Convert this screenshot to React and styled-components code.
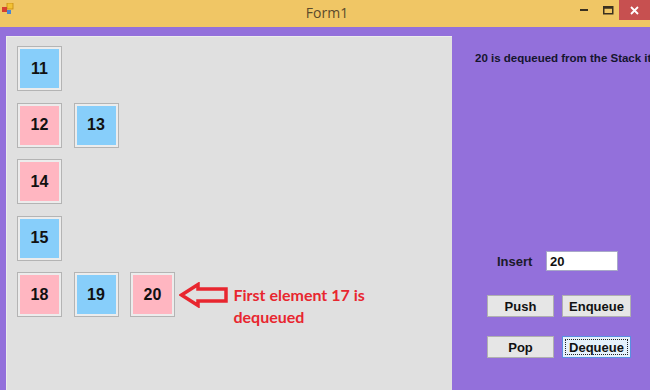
import styled, { createGlobalStyle } from 'styled-components';

const GlobalStyle = createGlobalStyle`
  html, body {
    margin: 0;
    padding: 0;
    background: #9370db;
  }
`;

const Window = styled.div`
  width: 650px;
  height: 390px;
  display: flex;
  flex-direction: column;
  overflow: hidden;
  font-family: "Liberation Sans", Arial, sans-serif;
`;

const TitleBar = styled.div`
  height: 27px;
  flex: none;
  background: #f0c665;
  display: grid;
  grid-template-columns: 1fr auto 1fr;
  align-items: start;
`;

const AppIcon = styled.div`
  padding: 3px 0 0 2px;
  display: flex;
`;

const Title = styled.div`
  font-family: "Open Sans", "Noto Sans", sans-serif;
  font-size: 14px;
  color: #5b4a2b;
  line-height: 25px;
  padding-left: 4px;
`;

const Controls = styled.div`
  display: flex;
  justify-content: flex-end;
  align-items: start;
`;

const CtrlButton = styled.div`
  width: ${(p) => p.$w}px;
  height: 20px;
  display: flex;
  align-items: center;
  justify-content: center;
  background: ${(p) => (p.$close ? '#c75050' : 'transparent')};
`;

const Client = styled.div`
  flex: 1;
  background: #9370db;
  display: flex;
  padding: 9px 0 0 6px;
  min-height: 0;
`;

const Panel = styled.div`
  width: 446px;
  flex: none;
  background: #e0e0e0;
  border-top: 1px solid #ececec;
  border-left: 1px solid #ececec;
  box-sizing: border-box;
  padding: 9px 0 0 10px;
  display: flex;
  flex-direction: column;
  gap: 11.5px;
`;

const Row = styled.div`
  display: flex;
  align-items: flex-start;
  gap: 11.5px;
`;

const Cell = styled.div`
  width: 45px;
  height: 45px;
  box-sizing: border-box;
  border: 1px solid #b4b4b4;
  box-shadow: inset 0 0 0 2px #ececec;
  background: ${(p) => (p.$pink ? '#ffb6c1' : '#87cefa')};
  display: flex;
  align-items: center;
  justify-content: center;
  font-weight: bold;
  font-size: 16px;
  color: #111;
`;

const Note = styled.div`
  display: flex;
  align-items: flex-start;
  margin-left: -8px;

  svg {
    margin-top: 10px;
  }
`;

const NoteText = styled.div`
  font-family: Lato, "Open Sans", sans-serif;
  font-weight: bold;
  font-size: 16px;
  line-height: 22px;
  color: #e8262f;
  margin-left: 5px;
  margin-top: 12px;
  width: 150px;
`;

const Side = styled.div`
  flex: 1;
  display: flex;
  flex-direction: column;
  padding-top: 16px;
  overflow: hidden;
`;

const Message = styled.div`
  font-size: 11.5px;
  font-weight: bold;
  color: #15152e;
  white-space: nowrap;
  padding-left: 23px;
`;

const InsertRow = styled.div`
  display: flex;
  align-items: center;
  margin-top: 187px;
  padding-left: 45px;
`;

const Label = styled.span`
  font-size: 13px;
  font-weight: bold;
  color: #1a1a2a;
  width: 49px;
`;

const TextBox = styled.div`
  width: 72px;
  height: 20px;
  box-sizing: border-box;
  background: #fff;
  border: 1px solid #a8a8c8;
  font-size: 13px;
  font-weight: bold;
  padding: 2px 0 0 3px;
  color: #111;
`;

const ButtonRow = styled.div`
  display: flex;
  gap: 8px;
  padding-left: 35px;
  margin-top: ${(p) => p.$top}px;
`;

const Button = styled.div`
  width: ${(p) => p.$w}px;
  height: 22px;
  box-sizing: border-box;
  border: 1px solid ${(p) => (p.$focus ? '#5a8ee0' : '#b0b0b0')};
  background: ${(p) => (p.$focus ? '#e5f1fb' : '#e6e6e6')};
  display: flex;
  align-items: center;
  justify-content: center;
  font-size: 13px;
  font-weight: bold;
  color: #111;
  position: relative;
`;

const FocusRing = styled.span`
  position: absolute;
  inset: 2px;
  border: 1px dotted #222;
`;

const rows = [
  [{ n: 11 }],
  [{ n: 12, pink: true }, { n: 13 }],
  [{ n: 14, pink: true }],
  [{ n: 15 }],
  [{ n: 18, pink: true }, { n: 19 }, { n: 20, pink: true }],
];

export default function App() {
  return (
    <Window>
      <GlobalStyle />
      <TitleBar>
        <AppIcon>
          <svg width="12" height="12" viewBox="0 0 12 12">
            <rect x="5" y="0" width="6" height="6" fill="#f3c233" stroke="#c58a12" strokeWidth="0.8" />
            <rect x="0" y="4" width="5" height="5" fill="#d64030" />
            <rect x="5" y="7" width="4" height="4" fill="#4a86d0" />
          </svg>
        </AppIcon>
        <Title>Form1</Title>
        <Controls>
          <CtrlButton $w={26}>
            <svg width="9" height="3" viewBox="0 0 9 3">
              <rect x="0" y="0" width="8" height="2" fill="#3a3020" />
            </svg>
          </CtrlButton>
          <CtrlButton $w={22}>
            <svg width="11" height="9" viewBox="0 0 11 9">
              <rect x="0.75" y="0.75" width="9" height="7" fill="none" stroke="#3a3020" strokeWidth="1.5" />
              <rect x="0.75" y="0.75" width="9" height="2" fill="#3a3020" />
            </svg>
          </CtrlButton>
          <CtrlButton $w={31} $close>
            <svg width="9" height="9" viewBox="0 0 9 9">
              <path d="M1 1L8 8M8 1L1 8" stroke="#fff" strokeWidth="1.8" />
            </svg>
          </CtrlButton>
        </Controls>
      </TitleBar>
      <Client>
        <Panel>
          {rows.map((row, i) => (
            <Row key={i}>
              {row.map((c) => (
                <Cell key={c.n} $pink={c.pink}>
                  {c.n}
                </Cell>
              ))}
              {i === rows.length - 1 && (
                <Note>
                  <svg width="50" height="26" viewBox="0 0 50 26">
                    <path
                      d="M2.5 13 L19 2.5 L19 7 L47 7 L47 19 L19 19 L19 23.5 Z"
                      fill="none"
                      stroke="#e8262f"
                      strokeWidth="3.5"
                      strokeLinejoin="miter"
                    />
                  </svg>
                  <NoteText>First element 17 is dequeued</NoteText>
                </Note>
              )}
            </Row>
          ))}
        </Panel>
        <Side>
          <Message>20 is dequeued from the Stack it</Message>
          <InsertRow>
            <Label>Insert</Label>
            <TextBox>20</TextBox>
          </InsertRow>
          <ButtonRow $top={24}>
            <Button $w={67}>Push</Button>
            <Button $w={69}>Enqueue</Button>
          </ButtonRow>
          <ButtonRow $top={19}>
            <Button $w={67}>Pop</Button>
            <Button $w={69} $focus>
              <FocusRing />
              Dequeue
            </Button>
          </ButtonRow>
        </Side>
      </Client>
    </Window>
  );
}
